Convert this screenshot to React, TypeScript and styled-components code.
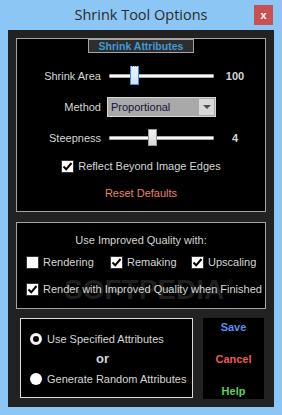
import React from 'react';
import styled, { createGlobalStyle } from 'styled-components';

const GlobalStyle = createGlobalStyle`
  html, body {
    margin: 0;
    padding: 0;
    background: #8cc6f4;
  }
  body {
    font-family: 'Liberation Sans', Arial, sans-serif;
  }
`;

const Window = styled.div`
  width: 282px;
  height: 415px;
  background: #8cc6f4;
  display: flex;
  flex-direction: column;
`;

const TitleBar = styled.div`
  height: 31px;
  display: grid;
  grid-template-columns: 1fr auto 1fr;
`;

const Title = styled.div`
  grid-column: 2;
  align-self: center;
  font-family: 'Open Sans', 'Noto Sans', sans-serif;
  font-size: 14.5px;
  color: #2b2b2b;
  margin-top: -2px;
`;

const CloseButton = styled.div`
  grid-column: 3;
  justify-self: end;
  align-self: start;
  margin: 5px 9px 0 0;
  width: 19px;
  height: 20px;
  background: #c75050;
  color: #fff;
  font-size: 11px;
  font-weight: bold;
  display: flex;
  align-items: center;
  justify-content: center;
`;

const Body = styled.div`
  position: relative;
  flex: 1;
  margin: 0 8px 8px;
  background: #222222;
  padding: 8px;
  display: flex;
  flex-direction: column;
`;

const Panel = styled.div<{ $height: number; $gap?: number }>`
  box-sizing: border-box;
  height: ${p => p.$height}px;
  margin-bottom: ${p => p.$gap ?? 0}px;
  border: 1px solid #a4a4a4;
  background: #000;
  display: flex;
  flex-direction: column;
`;

const Legend = styled.div`
  align-self: center;
  box-sizing: border-box;
  width: 106px;
  height: 14px;
  margin-bottom: 7px;
  border: 1px solid #a4a4a4;
  background: #2e2e2e;
  color: #3f9ad8;
  font-size: 10.5px;
  font-weight: bold;
  display: flex;
  align-items: center;
  justify-content: center;
`;

const Row = styled.div<{ $height: number; $center?: boolean; $top?: number; $indent?: number }>`
  box-sizing: border-box;
  height: ${p => p.$height}px;
  padding-top: ${p => p.$top ?? 0}px;
  padding-left: ${p => p.$indent ?? 0}px;
  display: flex;
  align-items: center;
  justify-content: ${p => (p.$center ? 'center' : 'flex-start')};
`;

const Label = styled.div`
  width: 84px;
  text-align: right;
  font-size: 11px;
  color: #d6d6d6;
  margin-right: 8px;
`;

const Text = styled.span<{ $color?: string }>`
  font-size: 11px;
  color: ${p => p.$color ?? '#d6d6d6'};
  white-space: nowrap;
`;

const SliderBox = styled.div`
  position: relative;
  width: 105px;
  height: 20px;
`;

const Track = styled.div`
  position: absolute;
  left: 0;
  right: 0;
  top: 8px;
  height: 2px;
  background: #fafafa;
  border: 1px solid #a8a8a8;
  border-radius: 1px;
`;

const Thumb = styled.div<{ $active?: boolean }>`
  position: absolute;
  top: ${p => (p.$active ? '0px' : '1px')};
  width: 9px;
  height: ${p => (p.$active ? '19px' : '17px')};
  box-sizing: border-box;
  border: 1px solid ${p => (p.$active ? '#3c8ee6' : '#9a9a9a')};
  border-top-style: ${p => (p.$active ? 'dotted' : 'solid')};
  background: ${p =>
    p.$active
      ? 'linear-gradient(#eaf4ff, #cfe5fd)'
      : 'linear-gradient(#f2f2f2, #dadada)'};
`;

const Value = styled.div`
  width: 42px;
  text-align: center;
  font-size: 11px;
  font-weight: bold;
  color: #d6d6d6;
`;

const Select = styled.div`
  box-sizing: border-box;
  width: 109px;
  height: 20px;
  margin-left: -2px;
  border: 1px solid #d6d6d6;
  background: #a9a9a9;
  display: flex;
  align-items: center;
  padding: 1px;
`;

const SelectText = styled.div`
  flex: 1;
  padding-left: 2px;
  font-size: 11px;
  color: #141438;
`;

const SelectArrow = styled.div`
  width: 15px;
  height: 16px;
  background: #d9d9d9;
  display: flex;
  align-items: center;
  justify-content: center;
  &::after {
    content: '';
    border-left: 4px solid transparent;
    border-right: 4px solid transparent;
    border-top: 4px solid #505050;
  }
`;

const Box = styled.div`
  box-sizing: border-box;
  width: 13px;
  height: 13px;
  background: #fff;
  border: 1px solid #333;
  margin-right: 4px;
  flex: none;
  display: flex;
  align-items: center;
  justify-content: center;
`;

const CheckGrid = styled.div`
  height: 24px;
  display: grid;
  grid-template-columns: 84px 81px auto;
  align-items: center;
  padding-left: 9px;
`;

const CheckItem = styled.div`
  display: flex;
  align-items: center;
`;

const BottomRow = styled.div`
  display: flex;
  gap: 10px;
  padding-left: 4px;
`;

const ChoicePanel = styled.div`
  box-sizing: border-box;
  width: 173px;
  height: 80px;
  border: 1px solid #dcdcdc;
  background: #000;
  padding: 10px 0 0 9px;
  display: flex;
  flex-direction: column;
`;

const RadioRow = styled.div`
  height: 20px;
  display: flex;
  align-items: center;
`;

const Radio = styled.div<{ $filled?: boolean }>`
  box-sizing: border-box;
  width: 12px;
  height: 12px;
  border-radius: 50%;
  background: ${p => (p.$filled ? '#fff' : '#000')};
  border: ${p => (p.$filled ? '0' : '3px solid #f4f4f4')};
  margin-right: 5px;
`;

const Or = styled.div`
  height: 20px;
  line-height: 20px;
  font-size: 13px;
  font-weight: bold;
  color: #d6d6d6;
  padding-left: 66px;
`;

const ButtonPanel = styled.div`
  box-sizing: border-box;
  width: 61px;
  height: 81px;
  padding: 3px 0 2px;
  background: #000;
  display: flex;
  flex-direction: column;
  align-items: center;
  justify-content: space-between;
`;

const ActionButton = styled.div<{ $color: string }>`
  font-size: 11px;
  font-weight: bold;
  color: ${p => p.$color};
  cursor: pointer;
`;

const Watermark = styled.div`
  position: absolute;
  left: 56px;
  top: 244px;
  font-size: 28px;
  font-weight: bold;
  color: rgba(255, 255, 255, 0.13);
  pointer-events: none;
  sup {
    font-size: 8px;
    vertical-align: 14px;
    margin-left: 3px;
  }
`;

const Check = () => (
  <svg width="11" height="11" viewBox="0 0 11 11">
    <path d="M1.5 5.5 L4.2 8.3 L9.5 2" fill="none" stroke="#000" strokeWidth="2" />
  </svg>
);

const Checkbox: React.FC<{ checked?: boolean; label: string }> = ({ checked, label }) => (
  <CheckItem>
    <Box>{checked && <Check />}</Box>
    <Text>{label}</Text>
  </CheckItem>
);

const Slider: React.FC<{ pos: number; active?: boolean }> = ({ pos, active }) => (
  <SliderBox>
    <Track />
    <Thumb $active={active} style={{ left: pos }} />
  </SliderBox>
);

export default function App() {
  return (
    <>
      <GlobalStyle />
      <Window>
        <TitleBar>
          <Title>Shrink Tool Options</Title>
          <CloseButton>x</CloseButton>
        </TitleBar>
        <Body>
          <Panel $height={174} $gap={10}>
            <Legend>Shrink Attributes</Legend>
            <Row $height={31}>
              <Label>Shrink Area</Label>
              <Slider pos={21} active />
              <Value>100</Value>
            </Row>
            <Row $height={31}>
              <Label>Method</Label>
              <Select>
                <SelectText>Proportional</SelectText>
                <SelectArrow />
              </Select>
            </Row>
            <Row $height={31}>
              <Label>Steepness</Label>
              <Slider pos={39} />
              <Value>4</Value>
            </Row>
            <Row $height={26} $center>
              <Checkbox checked label="Reflect Beyond Image Edges" />
            </Row>
            <Row $height={28} $center>
              <Text $color="#e8836a">Reset Defaults</Text>
            </Row>
          </Panel>

          <Panel $height={87} $gap={9}>
            <Row $height={27} $top={7} $center>
              <Text>Use Improved Quality with:</Text>
            </Row>
            <CheckGrid>
              <Checkbox label="Rendering" />
              <Checkbox checked label="Remaking" />
              <Checkbox checked label="Upscaling" />
            </CheckGrid>
            <Row $height={28} $top={2} $indent={9}>
              <Checkbox checked label="Render with Improved Quality when Finished" />
            </Row>
          </Panel>

          <BottomRow>
            <ChoicePanel>
              <RadioRow>
                <Radio />
                <Text>Use Specified Attributes</Text>
              </RadioRow>
              <Or>or</Or>
              <RadioRow>
                <Radio $filled />
                <Text>Generate Random Attributes</Text>
              </RadioRow>
            </ChoicePanel>
            <ButtonPanel>
              <ActionButton $color="#5b8ff0">Save</ActionButton>
              <ActionButton $color="#f05858">Cancel</ActionButton>
              <ActionButton $color="#5ad05e">Help</ActionButton>
            </ButtonPanel>
          </BottomRow>

          <Watermark>
            SOFTPEDIA<sup>®</sup>
          </Watermark>
        </Body>
      </Window>
    </>
  );
}
